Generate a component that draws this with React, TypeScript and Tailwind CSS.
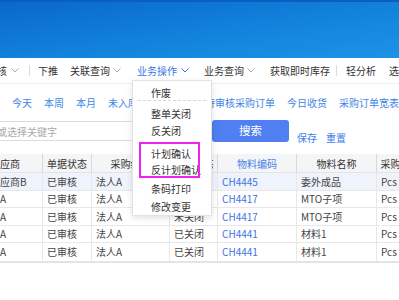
import React from 'react';

const Chevron = ({ className = '' }: { className?: string }) => (
  <svg viewBox="0 0 8 5" className={`w-[8px] h-[5px] shrink-0 ${className}`} fill="none" stroke="currentColor" strokeWidth="1">
    <path d="M0.5 0.5 L4 4 L7.5 0.5" />
  </svg>
);

const colW = ['w-[43px]', 'w-[49px]', 'w-[78px]', 'w-[48px]', 'w-[79px]', 'w-[80px]', 'w-[48px]'];

const headers = ['应商', '单据状态', '采购组织', '关闭状态', '物料编码', '物料名称', '采购单位'];

const rows = [
  ['应商B', '已审核', '法人A', '未关闭', 'CH4445', '委外成品', 'Pcs'],
  ['A', '已审核', '法人A', '未关闭', 'CH4417', 'MTO子项', 'Pcs'],
  ['A', '已审核', '法人A', '未关闭', 'CH4417', 'MTO子项', 'Pcs'],
  ['A', '已审核', '法人A', '已关闭', 'CH4441', '材料1', 'Pcs'],
  ['A', '已审核', '法人A', '已关闭', 'CH4441', '材料1', 'Pcs'],
];

const menu = ['整单关闭', '反关闭'];

export default function App() {
  return (
    <div className="relative w-[399px] h-[300px] overflow-hidden bg-white text-[10px] text-[#333] font-['Noto_Sans_CJK_SC','Noto_Sans',sans-serif]">
      {/* top blue header */}
      <div className="h-[58px] border-t-2 border-[#0a5fbe] bg-[linear-gradient(172deg,#0a68cc_0%,#1283dc_55%,#1c93e6_100%)]" />

      {/* toolbar */}
      <div className="h-[26px] flex items-center whitespace-nowrap border-b border-[#f0f0f0] text-[#333]">
        <span className="-ml-[3px] shrink-0">核</span>
        <Chevron className="ml-[4px] text-[#aaa]" />
        <div className="ml-[10px] w-px h-[11px] bg-[#dcdcdc] shrink-0" />
        <span className="ml-[8px] shrink-0">下推</span>
        <span className="ml-[12px] shrink-0">关联查询</span>
        <Chevron className="ml-[3px] text-[#aaa]" />
        <span className="ml-[16px] shrink-0 text-[#3a72e6]">业务操作</span>
        <Chevron className="ml-[4px] text-[#3a72e6]" />
        <span className="ml-[15px] shrink-0">业务查询</span>
        <Chevron className="ml-[3px] text-[#aaa]" />
        <span className="ml-[15px] shrink-0">获取即时库存</span>
        <div className="ml-[6px] w-px h-[11px] bg-[#dcdcdc] shrink-0" />
        <span className="ml-[9px] shrink-0">轻分析</span>
        <span className="ml-[13px] shrink-0">选项</span>
      </div>

      {/* quick filters */}
      <div className="h-[36px] flex items-center whitespace-nowrap pl-[12px] gap-[12px] text-[#3d86e6]">
        <span className="shrink-0">今天</span>
        <span className="shrink-0">本周</span>
        <span className="shrink-0">本月</span>
        <span className="shrink-0">未入库采购订单</span>
        <span className="shrink-0 ml-[15px]">待审核采购订单</span>
        <span className="shrink-0">今日收货</span>
        <span className="shrink-0">采购订单宽表报表</span>
      </div>

      {/* search row */}
      <div className="h-[22px] flex items-start">
        <div className="mt-[1px] w-[207px] h-[20px] shrink-0 border-y border-r border-[#dcdcdc] flex items-center overflow-hidden">
          <span className="-ml-[3px] text-[#aaa] whitespace-nowrap">或选择关键字</span>
        </div>
        <div className="ml-[5px] w-[77px] h-[22px] shrink-0 rounded-[3px] bg-[#4f7ff0] text-white text-[11.5px] flex items-center justify-center">
          搜索
        </div>
        <div className="ml-[8px] self-end -mb-[2px] flex gap-[9px] text-[#3d7de6] leading-[12px]">
          <span>保存</span>
          <span>重置</span>
        </div>
      </div>

      {/* table */}
      <div className="mt-[12px] w-[425px] border-b-2 border-[#e4e4e4]">
        <div className="flex h-[19px] bg-[#f4f5f7] border-b border-[#e4e4e4]">
          {headers.map((h, i) => (
            <div
              key={i}
              className={`${colW[i]} shrink-0 h-full flex items-center border-r border-[#d8d8d8] whitespace-nowrap overflow-hidden ${
                i === 0 ? 'justify-start' : 'justify-center'
              } ${i === 4 ? 'text-[#4a7fe6]' : 'text-[#333]'}`}
            >
              {h}
            </div>
          ))}
        </div>
        {rows.map((r, ri) => (
          <div
            key={ri}
            className={`flex h-[17.5px] border-b border-[#e8e8e8] last:border-b-0 ${ri === 0 ? 'bg-[#eef3fc]' : 'bg-white'}`}
          >
            {r.map((c, ci) => (
              <div
                key={ci}
                className={`${colW[ci]} shrink-0 h-full flex items-center border-r border-[#e8e8e8] whitespace-nowrap overflow-hidden ${
                  ci === 0 ? 'pl-0' : 'pl-[4px]'
                } ${ci === 4 ? 'text-[#3f73e6]' : 'text-[#444]'}`}
              >
                {c}
              </div>
            ))}
          </div>
        ))}
      </div>

      {/* dropdown menu */}
      <div className="absolute left-[132px] top-[80px] w-[80px] h-[136px] bg-white border border-[#e2e2e2] shadow-[0_2px_6px_rgba(0,0,0,0.12)] flex flex-col whitespace-nowrap text-[#333]">
        <div className="mt-[3px] h-[16px] pl-[18px] flex items-center">作废</div>
        <div className="mx-[5px] border-t border-dashed border-[#d6d6d6]" />
        <div className="mt-[4px] flex flex-col gap-[1px]">
          {menu.map((m) => (
            <div key={m} className="h-[16px] pl-[18px] flex items-center">{m}</div>
          ))}
        </div>
        <div className="mt-[7px] h-[16px] pl-[18px] flex items-center">计划确认</div>
        <div className="h-[16px] pl-[18px] flex items-center">反计划确认</div>
        <div className="mt-[3px] h-[16px] pl-[18px] flex items-center">条码打印</div>
        <div className="mt-[2px] h-[16px] pl-[18px] flex items-center">修改变更</div>
        {/* annotation box */}
        <div className="absolute left-[6px] top-[61px] w-[61px] h-[36px] border-2 border-[#ee22ee]" />
      </div>
    </div>
  );
}
